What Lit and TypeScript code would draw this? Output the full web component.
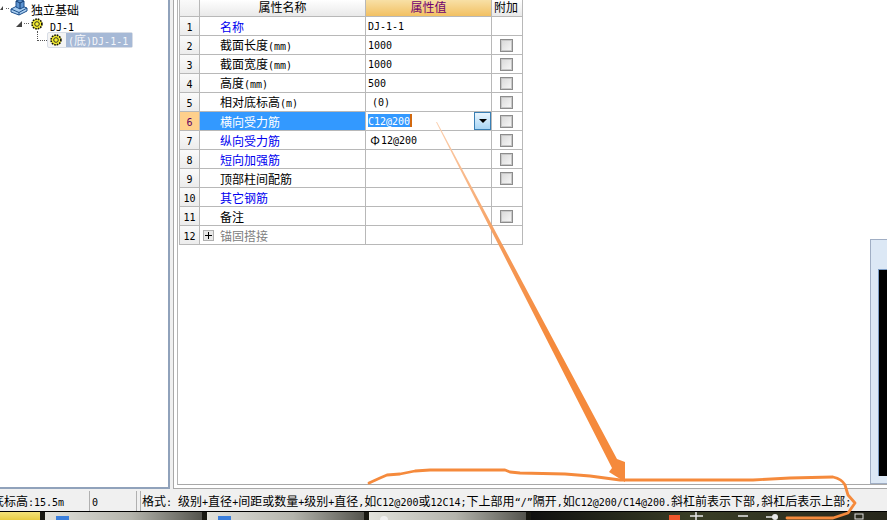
import { LitElement, html, css, svg } from "lit";
import { customElement } from "lit/decorators.js";

type Row = { n: string; name: string; val?: string; tone?: string; check?: boolean; active?: boolean; plus?: boolean; rebar?: boolean; indent?: boolean };

const ROWS: Row[] = [
  { n: "1", name: "名称", val: "DJ-1-1", tone: "blue" },
  { n: "2", name: "截面长度(mm)", val: "1000", check: true },
  { n: "3", name: "截面宽度(mm)", val: "1000", check: true },
  { n: "4", name: "高度(mm)", val: "500", check: true },
  { n: "5", name: "相对底标高(m)", val: "(0)", check: true, indent: true },
  { n: "6", name: "横向受力筋", val: "C12@200", check: true, active: true },
  { n: "7", name: "纵向受力筋", val: "12@200", tone: "blue", check: true, rebar: true },
  { n: "8", name: "短向加强筋", tone: "blue", check: true },
  { n: "9", name: "顶部柱间配筋", check: true },
  { n: "10", name: "其它钢筋", tone: "blue" },
  { n: "11", name: "备注", check: true },
  { n: "12", name: "锚固搭接", tone: "grey", plus: true },
];

const STATUS =
  "格式: 级别+直径+间距或数量+级别+直径,如C12@200或12C14;下上部用“/”隔开,如C12@200/C14@200.斜杠前表示下部,斜杠后表示上部;";

function mix(text: string) {
  const parts = text.match(/[\u4e00-\u9fff]+|[^\u4e00-\u9fff]+/g) ?? [];
  return html`<span class="t">${parts.map((p) =>
    /[\u4e00-\u9fff]/.test(p) ? html`<span class="cjk">${p}</span>` : html`<span class="lat">${p}</span>`
  )}</span>`;
}

const gear = html`<svg class="gear" width="12" height="12" viewBox="0 0 13 13">
  <circle cx="6.5" cy="6.5" r="5.8" fill="#f8f030"/>
  <circle cx="6.5" cy="6.5" r="5.3" fill="none" stroke="#111" stroke-width="1.8" stroke-dasharray="1.7 1.1"/>
  <circle cx="6.5" cy="6.5" r="2.5" fill="#f8f030" stroke="#222" stroke-width="1"/>
</svg>`;

const footing = html`<svg width="18" height="16" viewBox="0 0 18 16">
  <path d="M1 9 L9 5 L17 8 L17 11 L9 15 L1 12 Z" fill="#a8cdf0" stroke="#1c4f8c"/>
  <path d="M1 9 L9 12.5 L17 8 M9 12.5 V15" fill="none" stroke="#1c4f8c"/>
  <path d="M6 1 L10 -0.5 L14 1 V7 L10 9 L6 7 Z" fill="#5c93d0" stroke="#1c4f8c"/>
  <path d="M6 1 L10 3 L14 1 M10 3 V9" fill="none" stroke="#123a6e"/>
</svg>`;

@customElement("app-root")
export class AppRoot extends LitElement {
  static styles = css`
    :host { display: block; position: relative; width: 887px; height: 520px; overflow: hidden; background: #f0f0f0; font-family: "Noto Sans CJK SC", sans-serif; color: #000; }
    .t { display: inline-block; font-size: 12px; line-height: 13px; white-space: pre; }
    .cjk { font: 12px/13px "Noto Sans CJK SC", sans-serif; }
    .lat { font: 10px/13px "DejaVu Sans Mono", monospace; white-space: pre; }
    .main { display: flex; height: 490px; }
    .tree { box-sizing: border-box; width: 170px; height: 489px; background: #fff; border-right: 2px solid #90a2bb; border-bottom: 2px solid #90a2bb; display: flex; flex-direction: column; }
    .node { display: flex; align-items: center; }
    .n0 { height: 16px; padding-left: 0; }
    .n1 { height: 15px; padding-left: 16px; }
    .n2 { height: 16px; padding-left: 37px; margin-top: 1px; }
    .tri { width: 0; height: 0; border-left: 6px solid transparent; border-bottom: 6px solid #444; }
    .tri.small { border-left-width: 3px; border-bottom-width: 4px; }
    .dots { width: 5px; border-top: 1px dotted #666; margin: 0 2px; }
    .n0 .dots { margin: 0 1px 0 3px; width: 3px; }
    .elbow { width: 9px; height: 9px; margin-top: -9px; border-left: 1px dotted #555; border-bottom: 1px dotted #555; }
    .lbl { margin-left: 3px; }
    .n1 .lbl { margin-left: 7px; }
    .sel { display: flex; align-items: center; height: 16px; width: 86px; box-sizing: border-box; border: 1px solid #d8dde6; border-radius: 2px; padding-left: 2px; background: #f4f4f4; }
    .sel .txt { flex: 1; margin-left: 4px; padding-left: 2px; height: 100%; background: #a6b9d6; color: #f4f6fa; display: flex; align-items: center; }
    .right { box-sizing: border-box; flex: 1; height: 489px; margin-left: 3px; background: #fff; border-left: 1px solid #a8a8a8; border-bottom: 1px solid #a8a8a8; padding: 0 0 3px 3px; }
    .inner { box-sizing: border-box; height: 100%; border-left: 1px solid #b4b4b4; border-bottom: 1px solid #a8a8a8; padding-left: 1px; }
    .grid { display: grid; grid-template-columns: 21px 166px 126px 31px; grid-auto-rows: 19px; grid-template-rows: 17px; width: 344px; }
    .cell { box-sizing: border-box; border-right: 1px solid #b8b8b8; border-bottom: 1px solid #b8b8b8; display: flex; align-items: center; white-space: nowrap; }
    .body { overflow: hidden; }
    .num { border-left: 1px solid #b8b8b8; justify-content: center; background: linear-gradient(#fafafa, #ececec); }
    .num.on { background: #ffd08c; color: #600060; }
    .hd { background: linear-gradient(#ffffff, #e9e9e9); justify-content: center; padding-bottom: 3px; }
    .hd.val { background: linear-gradient(#f8e0a6, #f2c062); color: #700070; }
    .hd.add { justify-content: flex-start; padding-left: 2px; }
    .name { padding-left: 20px; }
    .name.blue { color: #0000f0; }
    .name.grey { color: #808080; padding-left: 3px; }
    .name.on { background: #3399ff; color: #fff; }
    .value { padding-left: 2px; padding-bottom: 1px; position: relative; }
    .value.indent { padding-left: 6px; }
    .mark { display: flex; align-items: center; height: 13px; background: #3399ff; color: #fff; border-right: 2px solid #d2690f; }
    .rebar { font: 12px/13px "Noto Sans CJK SC", sans-serif; display: inline-block; width: 10px; margin: 0 1px 0 2px; text-align: center; }
    .drop { position: absolute; right: 0; top: 0; box-sizing: border-box; width: 17px; height: 18px; border: 1px solid #3a7fb4; background: linear-gradient(#eaf5fd, #a9d6f5); display: flex; align-items: center; justify-content: center; }
    .drop i { width: 0; height: 0; border: 4px solid transparent; border-top: 4px solid #000; border-bottom: 0; }
    .check { justify-content: center; padding-right: 2px; }
    .box { box-sizing: border-box; width: 13px; height: 13px; border: 1px solid #8c8c8c; outline: 1px solid #c8c8c8; outline-offset: -2px; background: linear-gradient(135deg, #d8d8d8, #f8f8f8); }
    .plus { box-sizing: border-box; width: 11px; height: 11px; border: 1px solid #b0b0b0; background: #e8e8e8; margin-right: 6px; display: flex; align-items: center; justify-content: center; }
    .plus svg { display: block; }
    .status { box-sizing: border-box; height: 21px; display: flex; padding-top: 1px; gap: 2px; background: #f0f0f0; }
    .st { box-sizing: border-box; display: flex; align-items: center; border-right: 1px solid #b0b0b0; overflow: hidden; white-space: nowrap; }
    .s1 { width: 90px; }
    .s1 > span { margin-left: -8px; }
    .s2 { width: 47px; margin-left: -2px; padding-left: 2px; }
    .s3 { flex: 1; border-left: 1px solid #b0b0b0; padding-left: 1px; margin-left: 1px; border-right: 0; }
    .task { height: 9px; display: flex; background: #181812; border-top: 1px solid #000; gap: 5px; }
    .start { width: 40px; background: linear-gradient(#f3e27a, #e6c93c); }
    .btn { position: relative; width: 157px; background: linear-gradient(90deg, #e2e2dc, #b4b4ac 55%, #54544e); }
    .btn i { position: absolute; left: 11px; top: 4px; width: 13px; height: 5px; background: #3b7fdc; }
    .btn.mid i { background: #f0f0f0; width: 8px; border-radius: 4px 4px 0 0; }
    .tray { flex: 1; background: linear-gradient(90deg, #101010, #3a3e26 45%, #27271c); }
    .preview { position: absolute; left: 870px; top: 239px; box-sizing: border-box; width: 17px; height: 245px; background: #dce8f5; border: 1px solid #a0aec4; border-right: 0; padding: 29px 0 7px 7px; }
    .preview div { box-sizing: border-box; height: 100%; background: #000; border-left: 1px solid #7c9cc4; border-top: 1px solid #7c9cc4; }
    .ink { position: absolute; inset: 0; pointer-events: none; }
  `;

  private row(r: Row) {
    const nameCls = `cell body name ${r.tone ?? ""} ${r.active ? "on" : ""}`;
    return html`
      <div class="cell body num ${r.active ? "on" : ""}">${mix(r.n)}</div>
      <div class=${nameCls}>
        ${r.plus
          ? html`<span class="plus"><svg width="9" height="9" viewBox="0 0 9 9"><path d="M4.5 1V8M1 4.5H8" stroke="#000"/></svg></span>`
          : null}
        ${mix(r.name)}
      </div>
      <div class="cell body value ${r.indent ? "indent" : ""}">
        ${r.active
          ? html`<span class="mark">${mix(r.val ?? "")}</span><span class="drop"><i></i></span>`
          : r.rebar
          ? html`<span class="rebar">Φ</span>${mix(r.val ?? "")}`
          : mix(r.val ?? "")}
      </div>
      <div class="cell body check">${r.check ? html`<span class="box"></span>` : null}</div>
    `;
  }

  render() {
    return html`
      <div class="main">
        <div class="tree">
          <div class="node n0"><span class="tri small"></span><span class="dots"></span>${footing}<span class="lbl">${mix("独立基础")}</span></div>
          <div class="node n1"><span class="tri"></span><span class="dots"></span>${gear}<span class="lbl">${mix("DJ-1")}</span></div>
          <div class="node n2"><span class="elbow"></span>
            <div class="sel">${gear}<div class="txt">${mix("(底)DJ-1-1")}</div></div>
          </div>
        </div>
        <div class="right">
          <div class="inner">
            <div class="grid">
              <div class="cell num"></div>
              <div class="cell hd">${mix("属性名称")}</div>
              <div class="cell hd val">${mix("属性值")}</div>
              <div class="cell hd add">${mix("附加")}</div>
              ${ROWS.map((r) => this.row(r))}
            </div>
          </div>
        </div>
      </div>
      <div class="status">
        <div class="st s1">${mix("底标高:15.5m")}</div>
        <div class="st s2">${mix("0")}</div>
        <div class="st s3">${mix(STATUS)}</div>
      </div>
      <div class="task">
        <div class="start"></div>
        <div class="btn"><i></i></div>
        <div class="btn"><i></i></div>
        <div class="btn mid"><i></i></div>
        <div class="tray"></div>
      </div>
      <div class="preview"><div></div></div>
      <svg class="ink" width="887" height="520" viewBox="0 0 887 520">
        ${svg`
          <defs>
            <linearGradient id="arrow" gradientUnits="userSpaceOnUse" x1="436" y1="122" x2="600" y2="440">
              <stop offset="0" stop-color="#fbd0b0"/>
              <stop offset="0.4" stop-color="#f59a58"/>
              <stop offset="0.7" stop-color="#f58a3c"/>
            </linearGradient>
          </defs>
          <polygon points="436,122 437,122 617,459 625,462 625,482 609,472 612,468" fill="url(#arrow)"/>
          <path d="M369,483 L380,478 L387,475 L400,474 L415,471 L430,470 L505,470 L510,472 L520,473 L565,474 L590,476 L620,480 L753,480 L790,478 L833,477 Q842,479 845,485 L848,495 L855,503 L848,513 L833,518 L787,518" fill="none" stroke="#f58a3c" stroke-width="2.8" stroke-linejoin="round" stroke-linecap="round"/>
          <rect x="669" y="515" width="11" height="5" fill="#f0562a"/>
          <path d="M690,516 H703 M696,512 V520 M738,516 H748 M766,517 h9" stroke="#e8e8e8" stroke-width="1.5" fill="none"/>
          <circle cx="775" cy="517" r="3" fill="#e8e8e8"/>
          <rect x="855" y="514" width="8" height="5" fill="none" stroke="#e0e0e0"/>
        `}
      </svg>
    `;
  }
}
